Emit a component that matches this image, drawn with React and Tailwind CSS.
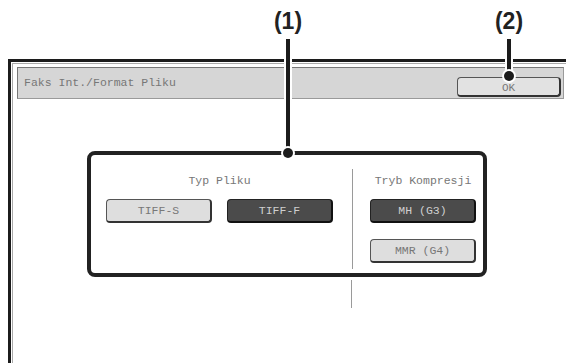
export default function App() {
  const mono = { fontFamily: '"Liberation Mono", "DejaVu Sans Mono", monospace' };
  const light =
    "flex items-center justify-center w-[106px] h-[24px] rounded-[4px] border border-[#555] border-r-2 border-b-2 border-r-[#333] border-b-[#333] bg-[#dedede] text-[#777] text-[11.5px]";
  const dark =
    "flex items-center justify-center w-[106px] h-[24px] rounded-[4px] border border-[#222] border-r-2 border-b-2 border-r-[#111] border-b-[#111] bg-[#4b4b4b] text-[#cfcfcf] text-[11.5px]";
  return (
    <div className="relative w-[566px] h-[363px] bg-white overflow-hidden" style={mono}>
      <div className="pt-[59px] pl-[8px] h-full">
        <div className="h-full border-l-[3px] border-t-[3px] border-[#1c1c1c] pl-px pt-px">
          <div className="h-full border-l border-t border-[#aaa] pl-[4px] pt-[3px]">
            <div className="flex items-end justify-between w-[547px] h-[32px] bg-[#d6d6d6] border border-[#777] border-b-[#9a9a9a] border-r-[#9a9a9a] pl-[6px] pr-[2px] pb-[1px]">
              <span className="self-center text-[11.5px] text-[#777] leading-none">Faks Int./Format Pliku</span>
              <div className="flex items-center justify-center pt-[3px] w-[104px] h-[20px] rounded-[4px] border border-[#555] border-r-2 border-b-2 border-r-[#333] border-b-[#333] bg-[#e2e2e2] text-[#777] text-[11px]">
                OK
              </div>
            </div>
            <div className="ml-[70px] mt-[52px] w-[400px] h-[126px] border-[4px] border-[#222] rounded-[8px] flex">
              <div className="flex flex-col items-center pl-[15px] pt-[19px]">
                <div className="text-[11.5px] text-[#777] leading-[14px]">Typ Pliku</div>
                <div className="flex gap-[15px] mt-[11px]">
                  <div className={light}>TIFF-S</div>
                  <div className={dark}>TIFF-F</div>
                </div>
              </div>
              <div className="ml-[19px] mt-[14px] mb-[4px] w-px bg-[#9a9a9a]" />
              <div className="flex flex-col items-center ml-[17px] pt-[19px]">
                <div className="text-[11.5px] text-[#777] leading-[14px]">Tryb Kompresji</div>
                <div className={dark + " mt-[11px]"}>MH (G3)</div>
                <div className={light + " mt-[16px]"}>MMR (G4)</div>
              </div>
            </div>
            <div className="ml-[334px] mt-[3px] w-px h-[28px] bg-[#9a9a9a]" />
          </div>
        </div>
      </div>

      {/* callout (1) */}
      <div className="absolute left-[269px] top-[10px] w-[38px] text-center text-[23px] font-bold leading-none text-[#222]" style={{ fontFamily: '"Liberation Sans", Arial, sans-serif' }}>(1)</div>
      <div className="absolute left-[286px] top-[39px] w-[4px] h-[112px] bg-[#1c1c1c] ring-2 ring-white" />
      <div className="absolute left-[283px] top-[148px] w-[10px] h-[10px] rounded-full bg-[#1c1c1c] ring-2 ring-white" />

      {/* callout (2) */}
      <div className="absolute left-[490px] top-[10px] w-[38px] text-center text-[23px] font-bold leading-none text-[#222]" style={{ fontFamily: '"Liberation Sans", Arial, sans-serif' }}>(2)</div>
      <div className="absolute left-[507px] top-[39px] w-[4px] h-[35px] bg-[#1c1c1c] ring-2 ring-white" />
      <div className="absolute left-[504px] top-[71px] w-[10px] h-[10px] rounded-full bg-[#1c1c1c] ring-2 ring-white" />
    </div>
  );
}
